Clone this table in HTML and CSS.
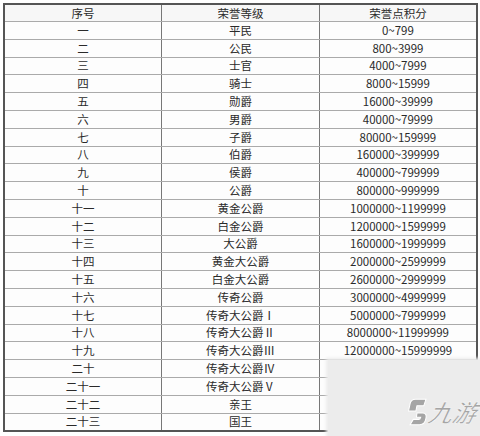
FILE: index.html
```html
<!DOCTYPE html>
<html lang="zh">
<head>
<meta charset="utf-8">
<link rel="stylesheet" href="styles.css">
</head>
<body>
<div class="wrap">
<table class="honor">
<thead>
<tr><th>序号</th><th>荣誉等级</th><th>荣誉点积分</th></tr>
</thead>
<tbody>
<tr><td>一</td><td>平民</td><td>0~799</td></tr>
<tr><td>二</td><td>公民</td><td>800~3999</td></tr>
<tr><td>三</td><td>士官</td><td>4000~7999</td></tr>
<tr><td>四</td><td>骑士</td><td>8000~15999</td></tr>
<tr><td>五</td><td>勋爵</td><td>16000~39999</td></tr>
<tr><td>六</td><td>男爵</td><td>40000~79999</td></tr>
<tr><td>七</td><td>子爵</td><td>80000~159999</td></tr>
<tr><td>八</td><td>伯爵</td><td>160000~399999</td></tr>
<tr><td>九</td><td>侯爵</td><td>400000~799999</td></tr>
<tr><td>十</td><td>公爵</td><td>800000~999999</td></tr>
<tr><td>十一</td><td>黄金公爵</td><td>1000000~1199999</td></tr>
<tr><td>十二</td><td>白金公爵</td><td>1200000~1599999</td></tr>
<tr><td>十三</td><td>大公爵</td><td>1600000~1999999</td></tr>
<tr><td>十四</td><td>黄金大公爵</td><td>2000000~2599999</td></tr>
<tr><td>十五</td><td>白金大公爵</td><td>2600000~2999999</td></tr>
<tr><td>十六</td><td>传奇公爵</td><td>3000000~4999999</td></tr>
<tr><td>十七</td><td>传奇大公爵Ⅰ</td><td>5000000~7999999</td></tr>
<tr><td>十八</td><td>传奇大公爵Ⅱ</td><td>8000000~11999999</td></tr>
<tr><td>十九</td><td>传奇大公爵Ⅲ</td><td>12000000~15999999</td></tr>
<tr><td>二十</td><td>传奇大公爵Ⅳ</td><td>16000000~19999999</td></tr>
<tr><td>二十一</td><td>传奇大公爵Ⅴ</td><td>20000000~24999999</td></tr>
<tr><td>二十二</td><td>亲王</td><td>25000000~29999999</td></tr>
<tr><td>二十三</td><td>国王</td><td>30000000~</td></tr>
</tbody>
</table>
<div class="watermark">
  <div class="wm-fog"></div>
  <div class="wm-logo">
    <svg class="wm-icon" width="19" height="30" viewBox="0 0 18 28">
      <path d="M17 2 L7 2 Q3 2 2 6 L0.5 13 L7.5 13 L8.5 8 L15 8 Z" fill="#a5a5a5" stroke="#fff" stroke-width="1"/>
      <path d="M8.5 15 L14 15 Q18 15 17 20 Q16 26 11 26 L2 26 L5 21 L10 21 Q11.5 21 12 19 L8 19 Z" fill="#a5a5a5" stroke="#fff" stroke-width="1"/>
    </svg>
    <span class="wm-text">九游</span>
  </div>
</div>
</div>
</body>
</html>
```
FILE: styles.css
```css
html, body {
  margin: 0;
  padding: 0;
  background: #ffffff;
}
.wrap {
  position: relative;
  width: 480px;
  height: 436px;
  overflow: hidden;
  padding: 3px 0 0 3px;
  box-sizing: border-box;
}
.honor {
  border-collapse: collapse;
  width: 475px;
  table-layout: fixed;
  font-family: "Noto Sans CJK SC", "Microsoft YaHei", sans-serif;
  font-size: 11.5px;
  color: #2a2a2a;
  border: 2px solid #555;
}
.honor th,
.honor td {
  height: 16.8px;
  padding: 0;
  text-align: center;
  vertical-align: middle;
  line-height: 15px;
  font-weight: normal;
  border-top: 1px solid #aaa;
  border-bottom: 1px solid #aaa;
  border-left: 1px solid #777;
  border-right: 1px solid #777;
}
.honor th {
  height: 16px;
  background: #f7f7f7;
}
.honor td {
  background: #fdfdfd;
}
.watermark {
  position: absolute;
  left: 328px;
  top: 360px;
  width: 162px;
  height: 86px;
}
.wm-fog {
  position: absolute;
  inset: 0;
  background: #ececec;
  box-shadow: 0 0 3px 2px #ececec;
}
.wm-logo {
  position: absolute;
  left: 80px;
  top: 37px;
  display: flex;
  align-items: center;
  gap: 2px;
}
.wm-icon {
  display: block;
}
.wm-text {
  font-family: "Noto Sans CJK SC", sans-serif;
  font-size: 24px;
  font-style: italic;
  font-weight: 500;
  color: #a5a5a5;
  line-height: 30px;
  transform: skewX(-12deg);
  -webkit-text-stroke: 0.5px #fff;
}
```
